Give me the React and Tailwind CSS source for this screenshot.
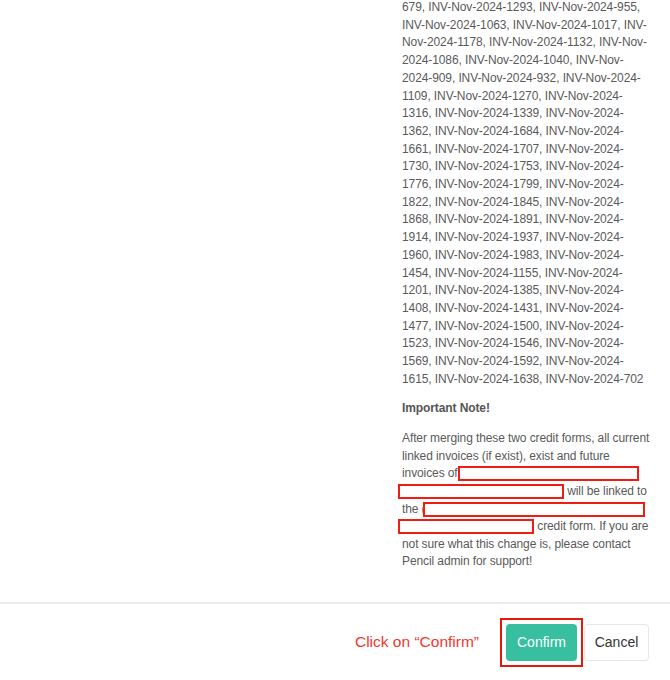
import React from 'react';

const invoiceLines = [
  '679, INV-Nov-2024-1293, INV-Nov-2024-955,',
  'INV-Nov-2024-1063, INV-Nov-2024-1017, INV-',
  'Nov-2024-1178, INV-Nov-2024-1132, INV-Nov-',
  '2024-1086, INV-Nov-2024-1040, INV-Nov-',
  '2024-909, INV-Nov-2024-932, INV-Nov-2024-',
  '1109, INV-Nov-2024-1270, INV-Nov-2024-',
  '1316, INV-Nov-2024-1339, INV-Nov-2024-',
  '1362, INV-Nov-2024-1684, INV-Nov-2024-',
  '1661, INV-Nov-2024-1707, INV-Nov-2024-',
  '1730, INV-Nov-2024-1753, INV-Nov-2024-',
  '1776, INV-Nov-2024-1799, INV-Nov-2024-',
  '1822, INV-Nov-2024-1845, INV-Nov-2024-',
  '1868, INV-Nov-2024-1891, INV-Nov-2024-',
  '1914, INV-Nov-2024-1937, INV-Nov-2024-',
  '1960, INV-Nov-2024-1983, INV-Nov-2024-',
  '1454, INV-Nov-2024-1155, INV-Nov-2024-',
  '1201, INV-Nov-2024-1385, INV-Nov-2024-',
  '1408, INV-Nov-2024-1431, INV-Nov-2024-',
  '1477, INV-Nov-2024-1500, INV-Nov-2024-',
  '1523, INV-Nov-2024-1546, INV-Nov-2024-',
  '1569, INV-Nov-2024-1592, INV-Nov-2024-',
  '1615, INV-Nov-2024-1638, INV-Nov-2024-702',
];

function Redact({ w }) {
  return (
    <span
      className="inline-block h-[15px] border-2 border-[#f21d12] align-[-4px]"
      style={{ width: w }}
    />
  );
}

export default function App() {
  return (
    <div className="w-[670px] h-[680px] overflow-hidden bg-white font-['Liberation_Sans',Arial,sans-serif] flex flex-col">
      <div className="flex-1 flex pl-[402px]">
        <div className="w-[250px] -mt-[1px] text-[12px] tracking-[-0.1px] leading-[17.7px] text-[#5a5a5a]">
          <div>
            {invoiceLines.map((line, i) => (
              <div key={i} className="whitespace-nowrap">{line}</div>
            ))}
          </div>

          <div className="mt-[12px] font-bold text-[#555]">Important Note!</div>

          <div className="mt-[12px] leading-[17.6px]">
            <div className="whitespace-nowrap">After merging these two credit forms, all current</div>
            <div className="whitespace-nowrap">linked invoices (if exist), exist and future</div>
            <div className="whitespace-nowrap">invoices of<Redact w={181} /></div>
            <div className="whitespace-nowrap -ml-[4px]"><Redact w={166} /> will be linked to</div>
            <div className="whitespace-nowrap">the (<span className="-ml-[3px]"><Redact w={222} /></span></div>
            <div className="whitespace-nowrap -ml-[4px]"><Redact w={136} /> credit form. If you are</div>
            <div className="whitespace-nowrap">not sure what this change is, please contact</div>
            <div className="whitespace-nowrap">Pencil admin for support!</div>
          </div>
        </div>
      </div>

      <div className="h-[2px] bg-[#ececec]" />

      <div className="h-[76px] flex items-center justify-end pr-[21px]">
        <span className="text-[15.5px] text-[#f0372e] mr-[21px]">Click on “Confirm”</span>
        <div className="border-2 border-[#e8170d] px-[4px] py-[4px]">
          <button className="w-[71px] h-[37px] rounded-[4px] bg-[#37bf9f] text-white text-[14px]">
            Confirm
          </button>
        </div>
        <button className="ml-[1px] w-[65px] h-[37px] rounded-[4px] border border-[#e6e6e6] bg-white text-[#333] text-[14px]">
          Cancel
        </button>
      </div>
    </div>
  );
}
